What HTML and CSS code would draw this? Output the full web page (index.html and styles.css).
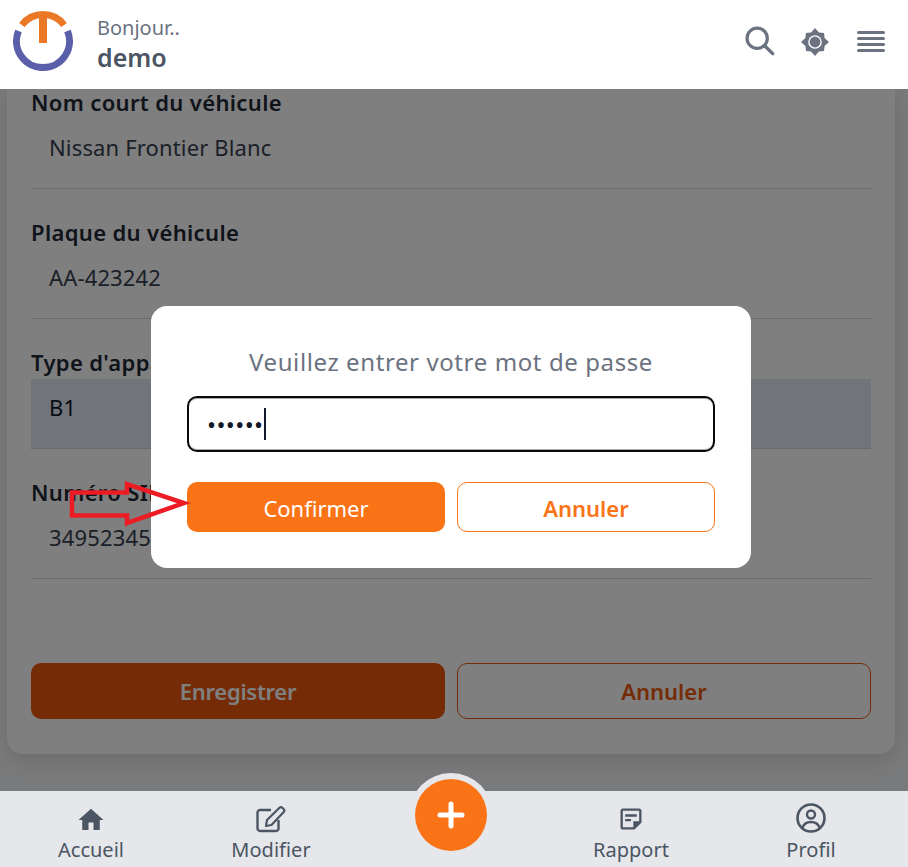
FILE: index.html
```html
<!DOCTYPE html>
<html lang="fr">
<head>
    <meta charset="UTF-8">
    <meta name="viewport" content="width=device-width, initial-scale=1.0">
    <title>Modifier le véhicule</title>
    <link rel="stylesheet" href="styles.css">
</head>
<body>
    <header class="top-bar">
        <svg class="logo" width="60" height="60" viewBox="0 0 60 60">
            <path d="M5.500 20A26.500 26.500 0 1 0 54.500 20" fill="none" stroke="#5b5fa9" stroke-width="7"/>
            <path d="M8.900 14A26.500 26.500 0 0 1 51.100 14" fill="none" stroke="#ea7826" stroke-width="7"/>
            <rect x="26" y="3" width="8" height="29" fill="#ea7826"/>
        </svg>
        <div class="greeting">
            <span class="hello">Bonjour..</span>
            <strong class="user">demo</strong>
        </div>
        <div class="top-actions">
            <svg class="icon-search" width="30" height="30" viewBox="0 0 32 32">
                <circle cx="13" cy="13" r="10.800" fill="none" stroke="#6b7280" stroke-width="3.400"/>
                <path d="M21 21L29.500 29.500" stroke="#6b7280" stroke-width="3.600" stroke-linecap="round"/>
            </svg>
            <svg class="icon-sun" width="28" height="28" viewBox="0 0 28 28">
                <path d="M14 0L18 4.400 23 5 23.600 10 28 14 23.600 18 23 23 18 23.600 14 28 10 23.600 5 23 4.400 18 0 14 4.400 10 5 5 10 4.400z" fill="#6b7280"/>
                <circle cx="14" cy="14" r="6.800" fill="#fff"/>
                <circle cx="14" cy="14" r="5.400" fill="#6b7280"/>
            </svg>
            <div class="menu-icon"><span></span><span></span><span></span><span></span></div>
        </div>
    </header>

    <main class="content">
        <section class="card">
            <div class="field">
                <label>Nom court du véhicule</label>
                <div class="value">Nissan Frontier Blanc</div>
            </div>
            <div class="field">
                <label>Plaque du véhicule</label>
                <div class="value">AA-423242</div>
            </div>
            <div class="field">
                <label>Type d'appareil</label>
                <div class="value value-select">B1</div>
            </div>
            <div class="field">
                <label>Numéro SIRET</label>
                <div class="value">34952345</div>
            </div>
            <div class="form-buttons">
                <button class="btn btn-save">Enregistrer</button>
                <button class="btn btn-cancel">Annuler</button>
            </div>
        </section>
    </main>

    <nav class="bottom-nav">
        <a class="nav-item">
            <svg width="30" height="28" viewBox="0 0 24 22.400"><path d="M10 20v-6h4v6h5v-8h3L12 3 2 12h3v8z" fill="#4b5563"/></svg>
            <span>Accueil</span>
        </a>
        <a class="nav-item">
            <svg width="30" height="28" viewBox="0 0 30 28">
                <path d="M15 5H4a2.500 2.500 0 0 0-2.500 2.500v16A2.500 2.500 0 0 0 4 26h16a2.500 2.500 0 0 0 2.500-2.500V15" fill="none" stroke="#4b5563" stroke-width="2.400"/>
                <path d="M10 21l1-6L23.500 2.800a2 2 0 0 1 2.800 0l1.400 1.400a2 2 0 0 1 0 2.800L15.500 20z" fill="none" stroke="#4b5563" stroke-width="2.200" stroke-linejoin="round"/>
            </svg>
            <span>Modifier</span>
        </a>
        <div class="nav-item nav-add">
            <button class="add-btn">
                <svg width="28" height="28" viewBox="0 0 28 28"><path d="M14 3v22M3 14h22" stroke="#fff" stroke-width="5" stroke-linecap="round"/></svg>
            </button>
        </div>
        <a class="nav-item">
            <svg width="30" height="28" viewBox="0 0 24 24"><path d="M19 5v9h-5v5H5V5h14m0-2H5c-1.100 0-2 .9-2 2v14c0 1.100.9 2 2 2h10l6-6V5c0-1.100-.9-2-2-2zm-7 11H7v-2h5v2zm5-4H7V8h10v2z" fill="#4b5563"/></svg>
            <span>Rapport</span>
        </a>
        <a class="nav-item">
            <svg width="30" height="30" viewBox="0 0 30 30" class="profile-icon">
                <circle cx="15" cy="15" r="13.500" fill="none" stroke="#4b5563" stroke-width="2.600"/>
                <circle cx="15" cy="11.500" r="4" fill="none" stroke="#4b5563" stroke-width="2.400"/>
                <path d="M6.500 24.500c1.500-4 5-5.500 8.500-5.500s7 1.500 8.500 5.500" fill="none" stroke="#4b5563" stroke-width="2.400"/>
            </svg>
            <span>Profil</span>
        </a>
    </nav>

    <div class="overlay">
        <div class="modal">
            <p class="modal-title">Veuillez entrer votre mot de passe</p>
            <div class="password-input"><span class="dots">••••••</span><span class="caret"></span></div>
            <div class="modal-buttons">
                <button class="btn btn-confirm">Confirmer</button>
                <button class="btn btn-outline">Annuler</button>
            </div>
        </div>
        <svg class="arrow" width="124" height="50" viewBox="0 0 124 50">
            <path d="M4 12.500H59V4L116 23 59 43V35.500H4z" fill="none" stroke="#ed1c24" stroke-width="4.500"/>
        </svg>
    </div>
</body>
</html>
```

FILE: styles.css
```css
* {
    margin: 0;
    padding: 0;
    box-sizing: border-box;
}

html, body {
    height: 100%;
    overflow: hidden;
}

body {
    font-family: 'Noto Sans', sans-serif;
    background-color: #f3f4f6;
    display: flex;
    flex-direction: column;
    position: relative;
}

/* Barre du haut */
.top-bar {
    height: 89px;
    background-color: #fff;
    display: flex;
    align-items: flex-start;
    padding: 0 23px 0 13px;
    position: relative;
    z-index: 20;
    flex-shrink: 0;
}

.logo {
    margin-top: 11px;
}

.greeting {
    display: flex;
    flex-direction: column;
    margin-left: 24px;
    margin-top: 14px;
}

.hello {
    font-size: 20px;
    line-height: 27px;
    color: #6b7280;
}

.user {
    font-size: 25px;
    line-height: 33px;
    font-weight: 600;
    color: #4b5563;
}

.top-actions {
    margin-left: auto;
    display: flex;
    align-items: center;
    margin-top: 26px;
}

.icon-sun {
    margin: 2px 28px 0 26px;
}

.menu-icon {
    width: 28px;
    display: flex;
    flex-direction: column;
    gap: 3px;
}

.menu-icon span {
    height: 3px;
    background-color: #6b7280;
    border-radius: 2px;
}

/* Formulaire */
.content {
    flex: 1;
}

.card {
    width: 888px;
    height: 665px;
    margin-left: 7px;
    padding: 2px 24px 0;
    background-color: #fff;
    border-radius: 0 0 16px 16px;
    box-shadow: 0 6px 20px rgba(0, 0, 0, 0.12);
}

.field {
    height: 130px;
}

.field label {
    display: block;
    font-size: 22px;
    line-height: 22px;
    letter-spacing: 0.35px;
    font-weight: 600;
    color: #1f2937;
    margin-bottom: 7px;
}

.value {
    height: 69px;
    padding: 0 18px 14px;
    display: flex;
    align-items: center;
    font-size: 22px;
    letter-spacing: 0.15px;
    color: #374151;
    border-bottom: 1px solid #d1d5db;
}

.value-select {
    height: 70px;
    margin-top: -1px;
    padding-bottom: 13px;
    background-color: #e2e8f4;
    color: #111827;
}

.form-buttons {
    display: grid;
    grid-template-columns: 1fr 1fr;
    gap: 12px;
    margin-top: 52px;
}

.btn {
    font-family: inherit;
    font-size: 22px;
    border-radius: 10px;
}

.form-buttons .btn {
    height: 56px;
    font-weight: 600;
}

.btn-save {
    background-color: #ea580c;
    border: none;
    color: #fff;
    letter-spacing: -0.3px;
}

.btn-cancel {
    background-color: transparent;
    border: 1px solid #ea580c;
    color: #ea580c;
}

/* Barre du bas */
.bottom-nav {
    height: 76px;
    background-color: #e5e7eb;
    display: grid;
    grid-template-columns: repeat(5, 180px);
    padding-left: 1px;
    position: relative;
    z-index: 20;
    flex-shrink: 0;
}

.nav-item {
    display: flex;
    flex-direction: column;
    align-items: center;
    justify-content: flex-end;
    color: #4b5563;
    font-size: 20px;
    line-height: 28px;
    padding-bottom: 3px;
    position: relative;
}

.nav-item > svg {
    margin-bottom: 3px;
}

.add-btn {
    position: absolute;
    left: 50%;
    top: -12px;
    width: 72px;
    height: 72px;
    margin-left: -36px;
    border: none;
    border-radius: 50%;
    background-color: #fb7317;
    box-shadow: 0 0 0 6px #e5e7eb;
    display: flex;
    align-items: center;
    justify-content: center;
}

/* Fenetre mot de passe */
.overlay {
    position: absolute;
    top: 0;
    left: 0;
    right: 0;
    bottom: 0;
    background-color: rgba(0, 0, 0, 0.5);
    z-index: 10;
    padding: 306px 6px 0 0;
    display: flex;
    justify-content: center;
    align-items: flex-start;
}

.modal {
    width: 600px;
    height: 262px;
    background-color: #fff;
    border-radius: 16px;
    padding: 36px;
}

.modal-title {
    font-size: 24px;
    letter-spacing: 0.6px;
    line-height: 40px;
    text-align: center;
    color: #6b7280;
}

.password-input {
    height: 56px;
    margin-top: 14px;
    padding-left: 18px;
    border: 2px solid #0a0a0a;
    border-radius: 10px;
    box-shadow: inset 0 1px 0 #aaa, inset 0 -1px 0 #aaa;
    display: flex;
    align-items: center;
}

.dots {
    font-size: 24px;
    letter-spacing: 0.4px;
    color: #111827;
}

.caret {
    width: 2px;
    height: 32px;
    background-color: #111827;
}

.modal-buttons {
    display: grid;
    grid-template-columns: 1fr 1fr;
    gap: 12px;
    margin-top: 30px;
}

.modal-buttons .btn {
    height: 50px;
    padding-top: 2px;
}

.btn-confirm {
    background-color: #fb7317;
    border: none;
    color: #fff;
}

.btn-outline {
    background-color: #fff;
    border: 1px solid #fb7317;
    color: #fb7317;
    font-weight: 600;
}

.arrow {
    position: absolute;
    left: 68px;
    top: 480px;
}
```
